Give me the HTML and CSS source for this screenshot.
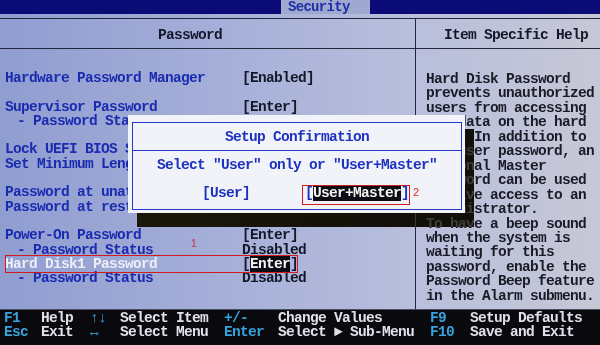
FILE: index.html
```html
<!DOCTYPE html>
<html lang="en">
<head>
  <meta charset="UTF-8" />
  <title>Security - Password</title>
  <link rel="stylesheet" href="styles.css">
</head>
<body>

  <div class="screen">
    <div class="topbar">
      <span class="tab">Security</span>
    </div>

    <div class="main">
      <div class="panel">
        <div class="head head-left">Password</div>
        <div class="head head-right">Item Specific Help</div>

        <!-- Lista de itens do menu (valores atrás da janela ficam vazios) -->
        <div class="items">
          <div class="row"><span class="label">Hardware Password Manager</span><span class="value">[Enabled]</span></div>
          <div class="row"></div>
          <div class="row"><span class="label">Supervisor Password</span><span class="value">[Enter]</span></div>
          <div class="row"><span class="label sub">- Password Status</span></div>
          <div class="row"></div>
          <div class="row"><span class="label">Lock UEFI BIOS Settings</span></div>
          <div class="row"><span class="label">Set Minimum Length</span></div>
          <div class="row"></div>
          <div class="row"><span class="label">Password at unattended boot</span></div>
          <div class="row"><span class="label">Password at restart</span></div>
          <div class="row"></div>
          <div class="row"><span class="label">Power-On Password</span><span class="value">[Enter]</span></div>
          <div class="row"><span class="label sub">- Password Status</span><span class="value">Disabled</span></div>
          <div class="row selected"><span class="label">Hard Disk1 Password</span><span class="value">[<span class="hl">Enter</span>]</span></div>
          <div class="row"><span class="label sub">- Password Status</span><span class="value">Disabled</span></div>
        </div>

        <!-- Texto de ajuda -->
        <div class="help">
          <div>Hard Disk Password</div>
          <div>prevents unauthorized</div>
          <div>users from accessing</div>
          <div>the data on the hard</div>
          <div>disk. In addition to</div>
          <div>the user password, an</div>
          <div>optional Master</div>
          <div>Password can be used</div>
          <div>to give access to an</div>
          <div>administrator.</div>
          <div>To have a beep sound</div>
          <div>when the system is</div>
          <div>waiting for this</div>
          <div>password, enable the</div>
          <div>Password Beep feature</div>
          <div>in the Alarm submenu.</div>
        </div>
      </div>
    </div>

    <div class="footer">
      <span class="key">F1</span><span class="txt">Help</span><span class="key">↑↓</span><span class="txt">Select Item</span><span class="key">+/-</span><span class="txt">Change Values</span><span class="key">F9</span><span class="txt">Setup Defaults</span>
      <span class="key">Esc</span><span class="txt">Exit</span><span class="key">↔</span><span class="txt">Select Menu</span><span class="key">Enter</span><span class="txt">Select ► Sub-Menu</span><span class="key">F10</span><span class="txt">Save and Exit</span>
    </div>

    <!-- Janela de confirmação por cima -->
    <div class="dialog-shadow"></div>
    <div class="dialog">
      <div class="dialog-frame">
        <div class="dialog-title">Setup Confirmation</div>
        <div class="dialog-text">Select "User" only or "User+Master"</div>
        <div class="dialog-buttons">
          <span>[User]</span>
          <span>[<span class="hl">User+Master</span>]</span>
        </div>
      </div>
    </div>

    <div class="mark mark-row"></div>
    <span class="note note-1">1</span>
    <div class="mark mark-button"></div>
    <span class="note note-2">2</span>
  </div>

</body>
</html>
```

FILE: styles.css
```css
body {
  margin: 0;
  background-color: #0a0a0e;
  font-family: 'Liberation Mono', 'DejaVu Sans Mono', monospace;
  font-weight: bold;
  font-size: 14.5px;
  letter-spacing: -0.7px;
}

.screen {
  position: relative;
  width: 600px;
  height: 345px;
  overflow: hidden;
}

.topbar {
  height: 14px;
  background-color: #0b0b78;
  display: flex;
  padding-left: 281px;
}

.tab {
  width: 89px;
  height: 14px;
  background-color: #9fa9cf;
  color: #1f2ea8;
  font-size: 14px;
  line-height: 15px;
  padding-left: 7px;
  box-sizing: border-box;
}

.main {
  height: 296px;
  padding-top: 4px;
  box-sizing: border-box;
  background: linear-gradient(90deg, #909dd0 0%, #a4aed8 35%, #b9bfdc 70%, #c6c8d6 100%);
}

.panel {
  height: 292px;
  display: grid;
  grid-template-columns: 415px 1fr;
  grid-template-rows: 30px 1fr;
  border-top: 1.5px solid #22263a;
  border-bottom: 1px solid #4a4e62;
  box-sizing: border-box;
}

.head {
  border-bottom: 1.5px solid #22263a;
  color: #15172a;
  padding-top: 9px;
  line-height: 14px;
  box-sizing: border-box;
}

.head-left {
  padding-left: 158px;
}

.head-right {
  padding-left: 28px;
  border-left: 1.5px solid #22263a;
}

.items {
  padding: 22px 0 0 5px;
}

.row {
  display: flex;
  height: 14.3px;
  line-height: 14.3px;
  white-space: nowrap;
}

.label {
  width: 237px;
  color: #1b2bb0;
}

.label.sub {
  padding-left: 12px;
  box-sizing: border-box;
}

.value {
  color: #15172a;
}

.selected .label {
  color: #eceef6;
}

.hl {
  background-color: #0c0c14;
  color: #f4f4f4;
}

.help {
  border-left: 1.5px solid #22263a;
  padding: 23px 0 0 10px;
  color: #1a1b26;
  line-height: 14.45px;
  white-space: nowrap;
}

.footer {
  height: 35px;
  padding: 2px 0 0 4px;
  box-sizing: border-box;
  display: grid;
  grid-template-columns: 37px 49px 30px 104px 54px 152px 40px 1fr;
  grid-auto-rows: 13.5px;
  line-height: 13.5px;
  white-space: nowrap;
}

.key {
  color: #36a3de;
}

.txt {
  color: #dfe0ea;
}

.dialog-shadow {
  position: absolute;
  left: 137px;
  top: 129px;
  width: 337px;
  height: 98px;
  backdrop-filter: invert(1) brightness(0.3);
  background-color: rgba(0, 0, 0, 0.1);
}

.dialog {
  position: absolute;
  left: 128px;
  top: 115px;
  width: 337px;
  height: 98px;
  background-color: #f1f3f9;
  padding: 7px 3px 3px 4px;
  box-sizing: border-box;
}

.dialog-frame {
  height: 100%;
  border: 1.5px solid #2338c4;
  box-sizing: border-box;
  color: #1d31c0;
}

.dialog-title {
  height: 27px;
  border-bottom: 1.5px solid #2338c4;
  display: flex;
  align-items: center;
  justify-content: center;
}

.dialog-text {
  margin-top: 7px;
  line-height: 14px;
  text-align: center;
}

.dialog-buttons {
  margin-top: 14px;
  line-height: 14px;
  display: flex;
  justify-content: center;
  gap: 55px;
  padding-left: 17px;
}

.mark {
  position: absolute;
  border: 1.5px solid #d01c1c;
  box-sizing: border-box;
}

.mark-row {
  left: 5px;
  top: 255px;
  width: 293px;
  height: 18px;
}

.mark-button {
  left: 302px;
  top: 185px;
  width: 108px;
  height: 20px;
}

.note {
  position: absolute;
  font-family: 'Liberation Sans', sans-serif;
  font-weight: normal;
  font-size: 11px;
  letter-spacing: 0;
  color: #d42a2a;
}

.note-1 {
  left: 191px;
  top: 238px;
  font-size: 10px;
}

.note-2 {
  left: 413px;
  top: 186px;
}
```
